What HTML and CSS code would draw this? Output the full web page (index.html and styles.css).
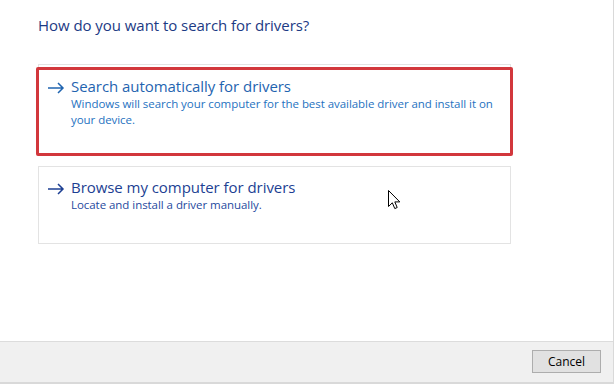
FILE: index.html
```html
<!DOCTYPE html>
<html>
<head>
<meta charset="utf-8">
<link rel="stylesheet" href="styles.css">
</head>
<body>
<div class="window">
  <main class="content">
    <h1 class="heading">How do you want to search for drivers?</h1>
    <div class="options">
      <div class="option option-hot">
        <svg class="arrow" width="18" height="12" viewBox="0 0 18 12"><path d="M1 6H16M11 1L16 6L11 11" fill="none" stroke="currentColor" stroke-width="1.5"/></svg>
        <div class="option-text">
          <div class="option-title">Search automatically for drivers</div>
          <div class="option-desc">Windows will search your computer for the best available driver and install it on your device.</div>
        </div>
        <div class="highlight"></div>
      </div>
      <div class="option option-cool">
        <svg class="arrow" width="18" height="12" viewBox="0 0 18 12"><path d="M1 6H16M11 1L16 6L11 11" fill="none" stroke="currentColor" stroke-width="1.5"/></svg>
        <div class="option-text">
          <div class="option-title">Browse my computer for drivers</div>
          <div class="option-desc">Locate and install a driver manually.</div>
        </div>
        <svg class="cursor" width="13" height="20" viewBox="0 0 13 20"><path d="M0.5 0.5V16.5L4.3 12.8L6.8 18.6L9.2 17.5L6.8 11.9H11.8Z" fill="#fff" stroke="#000" stroke-width="1" stroke-linejoin="miter"/></svg>
      </div>
    </div>
  </main>
  <footer class="footer">
    <button class="btn">Cancel</button>
  </footer>
</div>
</body>
</html>
```
FILE: styles.css
```css
* { box-sizing: border-box; }
html, body { margin: 0; padding: 0; background: #fff; }
body {
  font-family: "Open Sans", "Noto Sans", "Liberation Sans", sans-serif;
  width: 614px;
  height: 384px;
  overflow: hidden;
}
.window {
  display: flex;
  flex-direction: column;
  height: 384px;
  border-right: 1px solid #d9d9d9;
}
.content {
  flex: 1;
  padding: 14px 0 0 38px;
}
.heading {
  margin: 0;
  font-weight: 400;
  font-size: 15px;
  line-height: 22px;
  color: #1c3a84;
  letter-spacing: -0.05px;
}
.options {
  margin-top: 28px;
  display: flex;
  flex-direction: column;
  gap: 10px;
  width: 473px;
}
.option {
  position: relative;
  display: flex;
  align-items: flex-start;
  border: 1px solid #e3e3e3;
  padding: 11px 10px 0 8px;
}
.option-hot { height: 92px; color: #1f64b0; }
.option-cool { height: 78px; color: #1d3f93; }
.option-cool { padding-top: 10px; }
.arrow { flex: none; margin-top: 6px; margin-right: 6px; }
.option-title {
  font-size: 15px;
  line-height: 20px;
  letter-spacing: -0.05px;
}
.option-desc {
  font-size: 11.5px;
  line-height: 16px;
  letter-spacing: -0.05px;
}
.option-hot .option-desc { color: #2672bf; }
.option-cool .option-desc { color: #1f4a9e; }
.highlight {
  position: absolute;
  left: -3px;
  top: 2px;
  right: -3px;
  bottom: -1px;
  border: 3px solid #d2373c;
  border-radius: 2px;
}
.cursor {
  position: absolute;
  left: 349px;
  top: 23px;
}
.footer {
  height: 43px;
  flex: none;
  background: #f0f0f0;
  border-top: 1px solid #dcdcdc;
  border-bottom: 2px solid #d9d9d9;
  display: flex;
  justify-content: flex-end;
  align-items: flex-start;
  padding: 8px 12px 0 0;
}
.btn {
  width: 69px;
  height: 23px;
  background: #e1e1e1;
  border: 1px solid #adadad;
  font-family: "Open Sans", "Noto Sans", "Liberation Sans", sans-serif;
  font-size: 12px;
  color: #000;
  padding: 0;
}
```
